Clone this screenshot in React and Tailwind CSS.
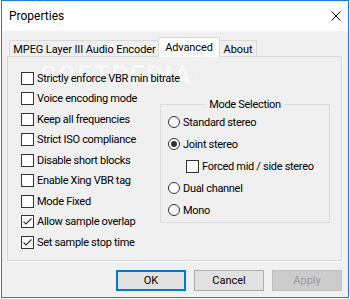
import React from "react";

const font = { fontFamily: "Roboto, 'Liberation Sans', sans-serif" };

function Check({ checked }) {
  return (
    <span className="w-[13px] h-[13px] shrink-0 border border-[#333333] bg-white flex items-center justify-center">
      {checked && (
        <svg width="11" height="11" viewBox="0 0 11 11">
          <path d="M1.5 5.5 L4 8 L9.5 2.5" fill="none" stroke="#333333" strokeWidth="1.1" />
        </svg>
      )}
    </span>
  );
}

function Radio({ checked }) {
  return (
    <span className="w-[12px] h-[12px] shrink-0 rounded-full border border-[#333333] bg-white flex items-center justify-center">
      {checked && <span className="w-[6px] h-[6px] rounded-full bg-[#333333]" />}
    </span>
  );
}

const boxes = [
  ["Strictly enforce VBR min bitrate", false],
  ["Voice encoding mode", false],
  ["Keep all frequencies", false],
  ["Strict ISO compliance", false],
  ["Disable short blocks", false],
  ["Enable Xing VBR tag", false],
  ["Mode Fixed", false],
  ["Allow sample overlap", true],
  ["Set sample stop time", true],
];

export default function App() {
  return (
    <div className="w-[350px] h-[299px] bg-white pl-px text-[11px] text-black leading-[13px]" style={font}>
      <div className="w-[348px] h-[298px] border border-[#1a7fd4] flex flex-col">
        <div className="h-[30px] shrink-0 bg-white flex items-center justify-between pl-[7px] pr-[7px]">
          <span className="text-[12px] leading-[14px] -mt-[1px]">Properties</span>
          <svg width="10" height="10" viewBox="0 0 10 10" className="-mt-[1px]">
            <path d="M0.5 0.5 L9.5 9.5 M9.5 0.5 L0.5 9.5" stroke="#000" strokeWidth="1" />
          </svg>
        </div>
        <div className="flex-1 bg-[#f0f0f0] flex flex-col pt-[6px] pb-[6px] pl-[5px] pr-[6px]">
          <div className="h-[19px] flex items-end pl-[2px] tracking-[-0.1px]">
            <div className="h-[16px] w-[149px] border-l border-t border-[#d9d9d9] bg-[#f0f0f0] flex items-center justify-center pl-[1px]">
              <span className="pt-[1px]">MPEG Layer III Audio Encoder</span>
            </div>
            <div className="relative z-10 h-[20px] w-[62px] -mb-px border-l border-t border-r border-[#d9d9d9] bg-white flex items-start justify-center">
              <span className="pt-[3px]">Advanced</span>
            </div>
            <div className="h-[16px] w-[37px] border-t border-r border-[#d9d9d9] bg-[#f0f0f0] flex items-center justify-center">
              <span className="pt-[1px]">About</span>
            </div>
          </div>
          <div className="relative h-[205px] w-[335px] border border-[#d9d9d9] bg-[#f0f0f0] shadow-[1px_1px_0_#ffffff]">
            <div className="absolute left-[32px] top-[5px] text-[27px] leading-[28px] font-bold tracking-[1px] text-[#f8f8f8] pointer-events-none select-none [text-shadow:0_0_1px_rgba(0,0,0,0.08)]">
              SOFTPEDIA<span className="text-[9px] align-top">®</span>
            </div>
            <div className="relative flex h-full tracking-[-0.3px]">
              <div className="w-[139px] ml-[13px] pt-[11px] flex flex-col shrink-0">
                {boxes.map(([label, c]) => (
                  <div key={label} className="h-[20.5px] flex items-center gap-[3px] whitespace-nowrap">
                    <Check checked={c} />
                    <span>{label}</span>
                  </div>
                ))}
              </div>
              <fieldset className="mt-[41px] w-[170px] h-[125px] border border-[#dcdcdc] px-[7px] pb-0 pt-0 m-0 shrink-0 self-start">
                <legend className="mx-auto px-[3px] leading-[13px]">Mode Selection</legend>
                <div className="flex flex-col">
                  <div className="h-[22px] flex items-center gap-[3px]">
                    <Radio />
                    <span>Standard stereo</span>
                  </div>
                  <div className="h-[22px] flex items-center gap-[3px]">
                    <Radio checked />
                    <span>Joint stereo</span>
                  </div>
                  <div className="h-[22px] flex items-center gap-[3px] pl-[18px]">
                    <Check />
                    <span>Forced mid / side stereo</span>
                  </div>
                  <div className="h-[22px] flex items-center gap-[3px]">
                    <Radio />
                    <span>Dual channel</span>
                  </div>
                  <div className="h-[22px] flex items-center gap-[3px]">
                    <Radio />
                    <span>Mono</span>
                  </div>
                </div>
              </fieldset>
            </div>
          </div>
          <div className="mt-[9px] flex justify-end gap-[8px]">
            <button className="w-[70px] h-[21px] border-2 border-[#0078d7] bg-[#e1e1e1] flex items-center justify-center">OK</button>
            <button className="w-[70px] h-[21px] border border-[#adadad] bg-[#e1e1e1] flex items-center justify-center">Cancel</button>
            <button className="w-[70px] h-[21px] border border-[#bfbfbf] bg-[#cccccc] text-[#9a9a9a] flex items-center justify-center">Apply</button>
          </div>
        </div>
      </div>
    </div>
  );
}
